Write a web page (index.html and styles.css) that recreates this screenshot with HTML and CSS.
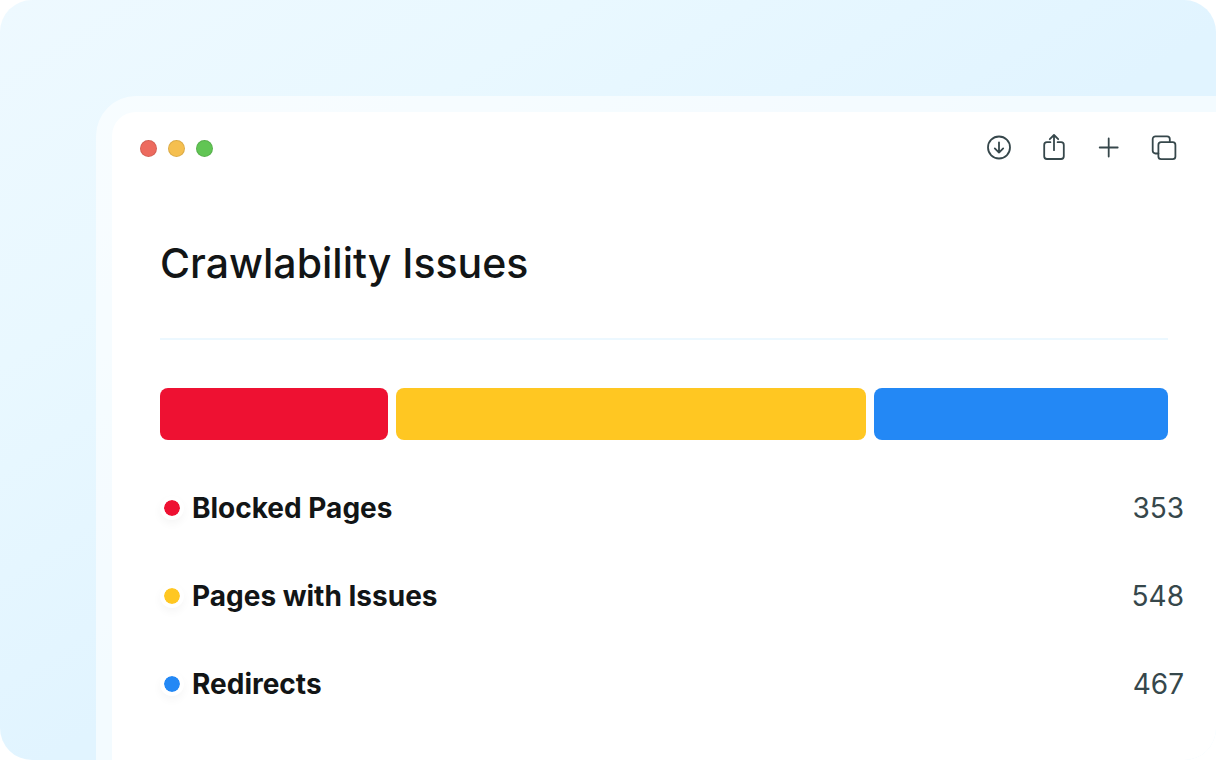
FILE: index.html
```
<!DOCTYPE html>
<html lang="en">

<head>
    <meta charset="utf-8" />
    <meta name="viewport" content="width=device-width, initial-scale=1" />
    <title>Crawlability Issues</title>
    <link rel="stylesheet" href="styles.css">
</head>

<body>
    <div class="stage">
        <div class="frame">
            <main class="window">
                <header class="toolbar">
                    <div class="lights">
                        <button class="light close" aria-label="Close"></button>
                        <button class="light minimize" aria-label="Minimize"></button>
                        <button class="light maximize" aria-label="Maximize"></button>
                    </div>
                    <div class="actions">
                        <button class="action" aria-label="Downloads">
                            <svg viewBox="0 0 28 28">
                                <circle cx="14" cy="13.5" r="11" />
                                <path d="M14 8.3v10.2M9.8 14.4l4.2 4.2 4.2-4.2" />
                            </svg>
                        </button>
                        <button class="action" aria-label="Share">
                            <svg viewBox="0 0 28 28">
                                <path d="M10.4 8.2H6.9a2.7 2.7 0 0 0-2.7 2.7v11.4a2.7 2.7 0 0 0 2.7 2.7h14.2a2.7 2.7 0 0 0 2.7-2.7V10.9a2.7 2.7 0 0 0-2.7-2.7h-3.5" />
                                <path d="M14 16.2V1.2M9.8 5.2L14 1l4.2 4.2" />
                            </svg>
                        </button>
                        <button class="action" aria-label="New tab">
                            <svg viewBox="0 0 28 28">
                                <path d="M13.7 4.5v18M4.7 13.5h18" />
                            </svg>
                        </button>
                        <button class="action" aria-label="Show tabs">
                            <svg viewBox="0 0 28 28">
                                <rect x="8.4" y="8.2" width="17" height="17" rx="2.7" />
                                <path d="M8.4 19.500H5.400a2.700 2.700 0 0 1-2.700-2.700V5a2.700 2.700 0 0 1 2.700-2.700h11.700a2.700 2.700 0 0 1 2.700 2.700v3.200" />
                            </svg>
                        </button>
                    </div>
                </header>

                <section class="report">
                    <h1>Crawlability Issues</h1>
                    <div class="bars">
                        <div class="bar red" style="flex-grow: 228"></div>
                        <div class="bar yellow" style="flex-grow: 470"></div>
                        <div class="bar blue" style="flex-grow: 294"></div>
                    </div>
                </section>

                <ul class="legend">
                    <li>
                        <span class="dot red"></span>
                        <span class="label">Blocked Pages</span>
                        <span class="value">353</span>
                    </li>
                    <li>
                        <span class="dot yellow"></span>
                        <span class="label">Pages with Issues</span>
                        <span class="value">548</span>
                    </li>
                    <li>
                        <span class="dot blue"></span>
                        <span class="label">Redirects</span>
                        <span class="value">467</span>
                    </li>
                </ul>
            </main>
        </div>
    </div>
</body>

</html>
```
FILE: styles.css
```
* {
    box-sizing: border-box;
}

body {
    margin: 0;
    background: #fff;
    color: #121516;
    font-family: Inter, "Liberation Sans", sans-serif;
}

.stage {
    display: flex;
    min-height: 100vh;
    padding: 96px 0 0 96px;
    border-radius: 32px;
    background: linear-gradient(to bottom right, #eef9ff, #e9f8ff 24%, #e1f4ff 52%);
    overflow: hidden;
}

.frame {
    display: flex;
    flex: 1;
    padding: 16px 0 0 16px;
    border-top-left-radius: 40px;
    background: rgba(255, 255, 255, 0.6);
}

.window {
    flex: 1;
    border-top-left-radius: 24px;
    background: #fff;
}

.toolbar {
    display: flex;
    align-items: center;
    justify-content: space-between;
    height: 72px;
    padding: 0 38px 0 28px;
}

.lights {
    display: flex;
    gap: 11px;
}

.light {
    width: 17px;
    height: 17px;
    padding: 0;
    border: 1px solid rgba(0, 0, 0, 0.1);
    border-radius: 50%;
}

.close {
    background: #ed6a5e;
}

.minimize {
    background: #f5bf4f;
}

.maximize {
    background: #61c554;
}

.actions {
    display: flex;
    gap: 27px;
}

.action {
    width: 28px;
    height: 28px;
    padding: 0;
    border: 0;
    background: none;
}

.action svg {
    display: block;
    fill: none;
    stroke: #36474b;
    stroke-width: 1.8;
    stroke-linecap: round;
    stroke-linejoin: round;
}

.report {
    padding: 48px 48px 0;
}

h1 {
    margin: 0 0 48px;
    padding-bottom: 44px;
    border-bottom: 2px solid #ecf8ff;
    font-size: 41px;
    font-weight: 500;
    line-height: 62px;
}

.bars {
    display: flex;
    gap: 8px;
}

.bar {
    flex-basis: 0;
    height: 52px;
    border-radius: 8px;
}

.red {
    background: #ee1132;
}

.yellow {
    background: #ffc722;
}

.blue {
    background: #2388f5;
}

.legend {
    display: flex;
    flex-direction: column;
    gap: 48px;
    margin: 0;
    padding: 48px 32px 32px 48px;
    list-style: none;
    font-size: 28px;
    line-height: 40px;
}

.legend li {
    display: flex;
    align-items: center;
    gap: 8px;
}

/* white ring around the marker, lifted by a faint shadow */
.dot {
    width: 24px;
    height: 24px;
    border: 4px solid #fff;
    border-radius: 50%;
    background-clip: padding-box;
    box-shadow: 0 4px 8px rgba(0, 0, 0, 0.04);
}

.label {
    flex: 1;
    font-weight: 700;
}

.value {
    color: #36474b;
}
```
